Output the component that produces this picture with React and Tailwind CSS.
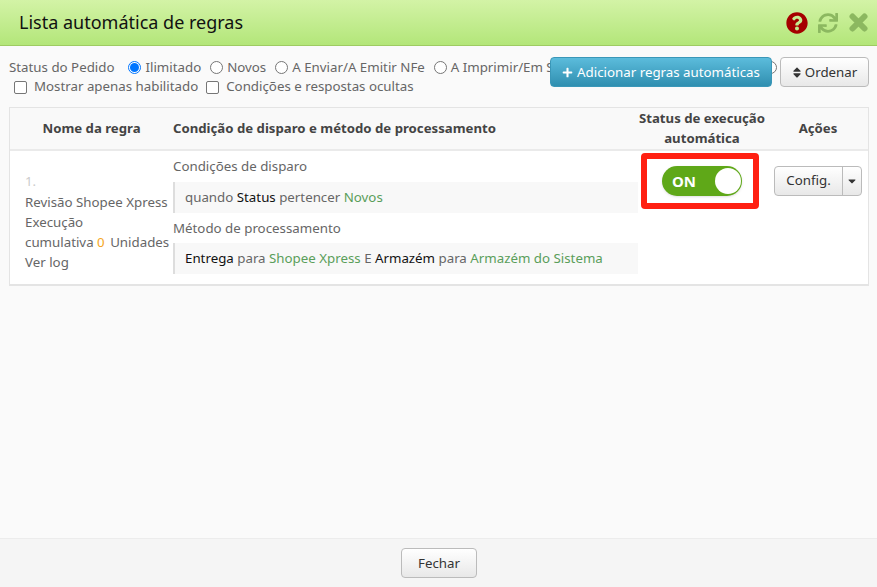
import React from "react";
import { FaQuestionCircle, FaSync, FaPlus, FaSort, FaCaretDown } from "react-icons/fa";

const Radio = ({ label, checked, labelClass = "" }) => (
  <span className="inline-flex items-center mr-[9px] shrink-0">
    <span className={"w-[13px] h-[13px] rounded-full border mr-[4px] bg-white flex items-center justify-center shrink-0 " + (checked ? "border-[#0075ff]" : "border-[#767676]")}>
      {checked && <span className="w-[9px] h-[9px] rounded-full bg-[#0075ff]" />}
    </span>
    <span className={labelClass}>{label}</span>
  </span>
);

const Check = ({ label, className }) => (
  <span className={"inline-flex items-center " + className}>
    <span className="w-[13px] h-[13px] rounded-[2px] border border-[#767676] bg-white mr-[7px] shrink-0" />
    {label}
  </span>
);

const G = ({ children }) => <span className="text-[#5a9e5a]">{children}</span>;
const B = ({ children }) => <span className="text-[#111]">{children}</span>;

export default function App() {
  return (
    <div className="w-[877px] h-[587px] flex flex-col overflow-hidden bg-[#fafafa] text-[13.3px] text-[#666] font-['Noto_Sans',sans-serif]">
      <header className="h-[46px] shrink-0 flex items-center justify-between pl-[19px] pr-[9px] border-b border-[#9ecb62] bg-gradient-to-b from-[#d3f3a6] to-[#b3e679]">
        <h1 className="text-[18px] text-[#111] font-normal">Lista automática de regras</h1>
        <div className="flex items-center">
          <FaQuestionCircle className="w-[22px] h-[22px] text-[#a50000]" />
          <FaSync className="w-[20px] h-[20px] ml-[10px] text-[#8cb860]" />
          <svg viewBox="0 0 19 19" className="w-[19px] h-[19px] ml-[11px]">
            <path d="M3.5 3.5 L15.5 15.5 M15.5 3.5 L3.5 15.5" stroke="#8cb860" strokeWidth="6" strokeLinecap="round" fill="none" />
          </svg>
        </div>
      </header>

      <main className="flex-1 min-h-0 flex flex-col pl-[9px] pr-[8px]">
        <div className="relative h-[61px] shrink-0">
          <div className="flex items-center h-[19px] mt-[12px] overflow-hidden whitespace-nowrap">
            <span className="mr-[14px] shrink-0">Status do Pedido</span>
            <Radio label="Ilimitado" checked />
            <Radio label="Novos" />
            <Radio label="A Enviar/A Emitir NFe" />
            <Radio label="A Imprimir/Em Separação" />
            <Radio label="Aguardando envio" labelClass="inline-block w-[118px] overflow-hidden" />
            <Radio label="Enviado" />
          </div>
          <div className="flex items-center h-[20px] whitespace-nowrap">
            <Check label="Mostrar apenas habilitado" className="ml-[5px] mr-[8px]" />
            <Check label="Condições e respostas ocultas" />
          </div>
          <div className="absolute right-0 top-[11px] flex items-center gap-[8px]">
            <button className="h-[30px] w-[222px] pt-[1px] rounded-[4px] text-white bg-gradient-to-b from-[#5bbcdc] to-[#2f8fb0] border border-[#3a97b8] flex items-center justify-center gap-[4px] text-[13.3px]">
              <FaPlus className="w-[11px] h-[11px]" />
              Adicionar regras automáticas
            </button>
            <button className="h-[30px] w-[89px] pt-[1px] rounded-[4px] text-[#333] bg-gradient-to-b from-white to-[#e8e8e8] border border-[#bbb] flex items-center justify-center gap-[3px] text-[13.3px]">
              <FaSort className="w-[10px] h-[13px]" />
              Ordenar
            </button>
          </div>
        </div>

        <div className="border border-[#e4e4e4] border-b-2 bg-white">
          <div className="h-[43px] pb-[2px] flex items-center bg-[#f9f9f9] border-b-2 border-[#eaeaea] font-bold text-[13.2px] text-[#444] text-center leading-[20px]">
            <div className="w-[163px] shrink-0">Nome da regra</div>
            <div className="w-[465px] shrink-0 text-left">Condição de disparo e método de processamento</div>
            <div className="w-[128px] shrink-0">Status de execução automática</div>
            <div className="flex-1 pl-[2px]">Ações</div>
          </div>
          <div className="h-[133px] flex">
            <div className="w-[163px] shrink-0 pl-[15px] pt-[20px] leading-[20px] whitespace-nowrap">
              <div className="text-[#ccc] h-[21px]">1.</div>
              <div>Revisão Shopee Xpress</div>
              <div>Execução</div>
              <div>cumulativa <span className="text-[#f5a623]">0</span> <span className="ml-[2px]">Unidades</span></div>
              <div>Ver log</div>
            </div>
            <div className="w-[465px] shrink-0 pt-[4px] flex flex-col">
              <div className="h-[22px] leading-[22px]">Condições de disparo</div>
              <div className="mt-[5px] h-[31px] leading-[31px] pl-[10px] bg-[#f8f8f8] border-l-2 border-[#ddd]">
                quando <B>Status</B> pertencer <G>Novos</G>
              </div>
              <div className="mt-[3px] h-[25px] leading-[25px]">Método de processamento</div>
              <div className="mt-[2px] h-[31px] leading-[31px] pl-[10px] bg-[#f8f8f8] border-l-2 border-[#ddd]">
                <B>Entrega</B> para <G>Shopee Xpress</G> E <B>Armazém</B> para <G>Armazém do Sistema</G>
              </div>
            </div>
            <div className="w-[128px] shrink-0 pl-[3px] pt-[2px]">
              <div className="w-[118px] h-[56px] border-[6px] border-[#ff2012] rounded-[4px] flex items-center pl-[15px]">
                <div className="w-[80px] h-[30px] rounded-full bg-[#5fa818] flex items-center justify-between pl-[10px] pr-[1px] shadow-sm">
                  <span className="text-white font-bold text-[15px]">ON</span>
                  <span className="w-[26px] h-[26px] rounded-full bg-white" />
                </div>
              </div>
            </div>
            <div className="flex-1 pt-[15px] pl-[8px] flex">
              <div className="flex h-[30px] text-[#333] border border-[#bbb] rounded-[4px] bg-gradient-to-b from-white to-[#e8e8e8]">
                <span className="w-[68px] flex items-center justify-center border-r border-[#bbb]">Config.</span>
                <span className="w-[18px] flex items-center justify-center"><FaCaretDown className="w-[12px] h-[12px]" /></span>
              </div>
            </div>
          </div>
        </div>
      </main>

      <footer className="h-[49px] shrink-0 flex items-center justify-center bg-[#f5f5f5] border-t border-[#ececec]">
        <button className="w-[76px] h-[30px] pt-[1px] pl-[1px] rounded-[4px] text-[#333] text-[13.3px] bg-gradient-to-b from-white to-[#e8e8e8] border border-[#bbb]">Fechar</button>
      </footer>
    </div>
  );
}
